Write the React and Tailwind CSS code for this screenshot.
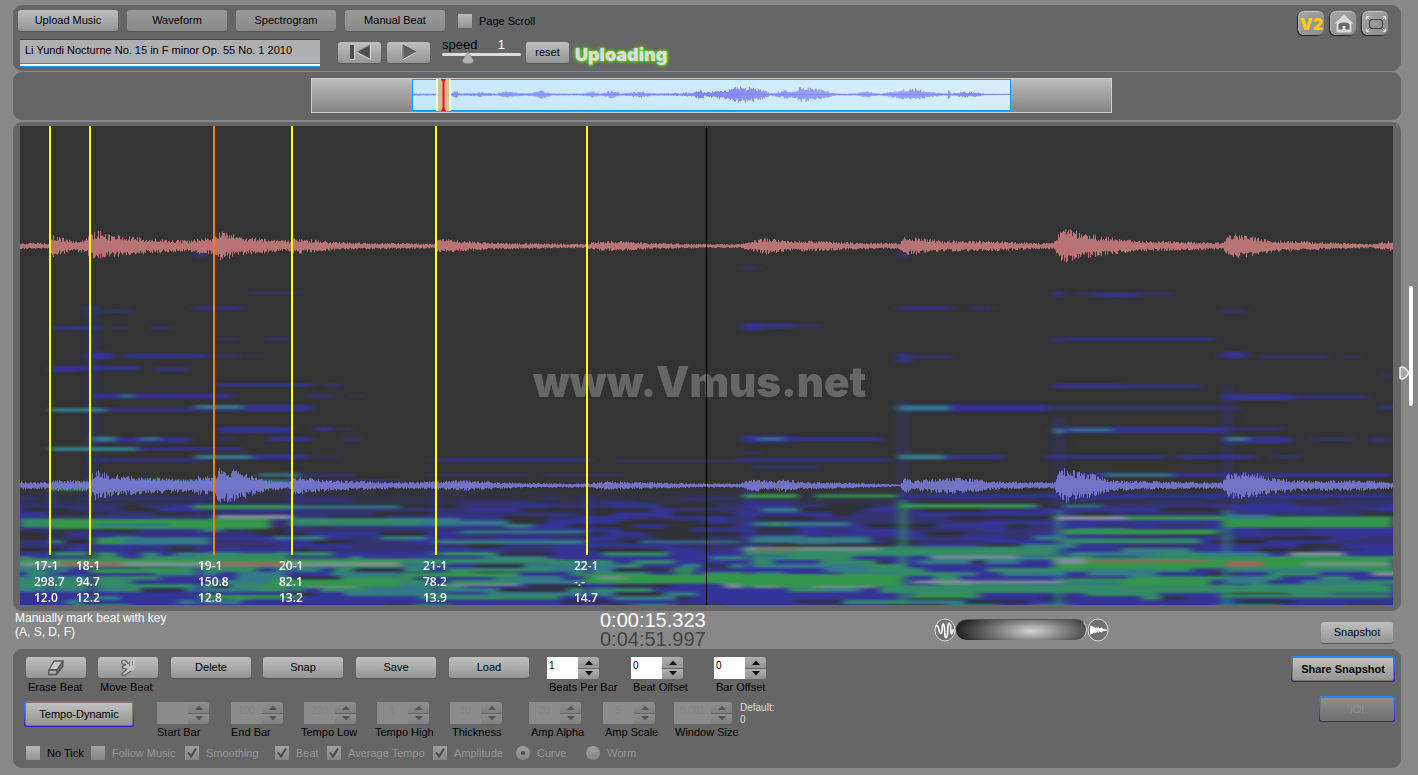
import React, { useState } from "react";

const X0 = 20;
const Y0 = 126;
const W = 1373;
const H = 479;

// small seeded generator so the drawing is the same on every load
const makeRandom = (seed) => {
  let s = seed;
  return () => {
    s = (s * 1664525 + 1013904223) % 4294967296;
    return s / 4294967296;
  };
};

const envelopeAt = (keys, x) => {
  for (let i = 1; i < keys.length; i++) {
    if (x <= keys[i][0]) {
      const [x1, a1] = keys[i - 1];
      const [x2, a2] = keys[i];
      return a1 + ((a2 - a1) * (x - x1)) / (x2 - x1 || 1);
    }
  }
  return keys[keys.length - 1][1];
};

// Build the wave outline as one vertical stroke for every pixel
const wavePath = (keys, mid, seed) => {
  const rnd = makeRandom(seed);
  let d = "";
  for (let x = keys[0][0]; x < keys[keys.length - 1][0]; x++) {
    const a = envelopeAt(keys, x);
    const up = a * (0.5 + rnd() * 0.6);
    const down = a * (0.5 + rnd() * 0.6);
    d += `M${x + 0.5} ${(mid - up).toFixed(1)}V${(mid + down).toFixed(1)}`;
  }
  return d;
};

const redWave = [
  [20, 3], [48, 3], [51, 11], [60, 8], [75, 5], [85, 7], [90, 11], [98, 15], [106, 11],
  [130, 9], [150, 7], [190, 5], [198, 8], [212, 8], [218, 14], [228, 12], [245, 8], [290, 5],
  [293, 8], [312, 6], [335, 4], [370, 3], [400, 3], [435, 2], [438, 7], [460, 5], [500, 3],
  [585, 2], [595, 4], [615, 5], [650, 3], [700, 2], [740, 2], [752, 5], [768, 8], [785, 5],
  [812, 5], [840, 4], [870, 3], [899, 3], [904, 9], [916, 8], [942, 5], [993, 5], [1034, 3],
  [1053, 3], [1058, 12], [1066, 18], [1081, 12], [1106, 9], [1137, 5], [1199, 4], [1223, 3],
  [1228, 12], [1242, 11], [1271, 6], [1312, 4], [1370, 2], [1384, 4], [1393, 5],
];

const blueWave = [
  [20, 4], [50, 3], [52, 5], [88, 5], [92, 13], [97, 14], [110, 11], [130, 9], [150, 8],
  [190, 6], [198, 9], [214, 8], [219, 17], [235, 15], [250, 10], [268, 5], [288, 3], [293, 9],
  [310, 7], [330, 5], [370, 4], [400, 3], [436, 4], [470, 5], [500, 3], [560, 2], [585, 2],
  [605, 4], [650, 3], [700, 2], [740, 2], [746, 5], [756, 6], [770, 4], [785, 6], [800, 4],
  [840, 3], [900, 1], [904, 8], [913, 4], [932, 7], [952, 8], [968, 7], [993, 4], [1045, 3],
  [1054, 3], [1059, 14], [1067, 17], [1081, 13], [1096, 10], [1112, 5], [1158, 4], [1222, 3],
  [1228, 12], [1251, 13], [1269, 8], [1297, 5], [1364, 5], [1393, 3],
];

const overviewWave = [
  [412, 1], [450, 1], [454, 4], [459, 1], [480, 2], [495, 1], [506, 3], [525, 1], [540, 4],
  [552, 1], [580, 1], [592, 3], [600, 1], [612, 4], [620, 1], [640, 3], [655, 1], [693, 2],
  [699, 5], [705, 2], [715, 4], [728, 5], [738, 8], [752, 7], [762, 5], [770, 1], [785, 4],
  [793, 3], [800, 7], [812, 6], [825, 4], [836, 1], [855, 1], [866, 3], [880, 1], [900, 4],
  [915, 6], [927, 3], [945, 1], [948, 1], [949, 7], [951, 1], [965, 3], [980, 2], [985, 0.6],
  [1011, 0.6],
];

const colours = {
  b: "#333370",
  B: "#333396",
  t: "#337a88",
  g: "#33964a",
  G: "#338a66",
  m: "#7f8f96",
  r: "#a85e62",
};

// [y, x1, x2, colour, thickness]
const bands = [
  [255, 193, 206, "b", 6], [293, 250, 300, "b", 2], [308, 195, 242, "B", 3], [311, 85, 98, "b", 8],
  [311, 100, 132, "b", 3], [328, 50, 102, "B", 3], [328, 113, 130, "b", 2], [328, 150, 172, "b", 3],
  [339, 215, 240, "b", 2], [339, 268, 290, "b", 3], [356, 86, 113, "B", 7], [356, 123, 208, "B", 4],
  [356, 215, 240, "b", 3], [356, 250, 262, "b", 2], [369, 50, 80, "B", 6], [368, 80, 140, "B", 4],
  [369, 155, 190, "b", 5], [385, 215, 312, "B", 3], [385, 323, 342, "B", 2], [396, 90, 232, "B", 5],
  [396, 120, 133, "t", 3], [396, 307, 333, "B", 2], [396, 350, 364, "b", 2], [408, 195, 312, "B", 6],
  [407, 195, 242, "t", 4], [410, 100, 200, "B", 3], [410, 50, 105, "t", 4], [430, 217, 293, "B", 6],
  [429, 315, 332, "B", 4], [429, 342, 355, "b", 2], [440, 90, 190, "B", 5], [439, 92, 115, "t", 5],
  [439, 140, 160, "t", 3], [439, 215, 235, "b", 3], [439, 268, 312, "B", 4], [439, 342, 362, "b", 3],
  [449, 130, 242, "B", 3], [449, 50, 138, "t", 4], [457, 195, 308, "B", 5], [457, 195, 252, "t", 4],
  [457, 315, 340, "b", 2], [460, 95, 200, "B", 3], [460, 433, 590, "B", 3], [461, 615, 740, "b", 2],
  [475, 258, 300, "t", 3], [475, 300, 355, "B", 2], [484, 90, 292, "t", 8], [489, 50, 88, "g", 3],
  [475, 427, 530, "b", 2], [475, 545, 625, "b", 2], [481, 300, 400, "b", 3],
  [326, 743, 795, "B", 4], [326, 795, 822, "b", 3], [327, 743, 762, "B", 7], [268, 743, 758, "b", 3],
  [439, 743, 882, "B", 4], [439, 743, 790, "B", 7], [439, 757, 783, "t", 3], [460, 735, 890, "B", 3],
  [467, 752, 818, "b", 3], [453, 743, 762, "b", 2], [255, 898, 909, "b", 7], [294, 1054, 1064, "B", 5],
  [294, 1074, 1174, "b", 3], [295, 1096, 1137, "B", 4], [308, 898, 952, "B", 3], [308, 972, 993, "b", 3],
  [311, 1220, 1247, "b", 3], [339, 1053, 1215, "B", 3], [341, 1054, 1064, "b", 6], [358, 898, 909, "B", 10],
  [357, 909, 952, "b", 3], [355, 1220, 1248, "B", 6], [357, 1260, 1328, "b", 3], [357, 1342, 1362, "b", 2],
  [375, 1381, 1393, "b", 3], [386, 1053, 1200, "B", 3], [386, 1054, 1122, "B", 4], [397, 1222, 1368, "B", 3],
  [397, 1224, 1292, "B", 6], [408, 898, 1050, "B", 7], [408, 898, 950, "t", 5], [408, 1045, 1238, "b", 4],
  [407, 1381, 1393, "B", 4], [430, 1053, 1228, "B", 6], [431, 1054, 1064, "t", 5], [430, 1070, 1112, "t", 3],
  [429, 1225, 1282, "b", 4], [440, 1222, 1292, "B", 6], [439, 1226, 1248, "t", 4], [439, 1311, 1355, "b", 3],
  [440, 1368, 1393, "b", 4], [457, 898, 1004, "B", 4], [457, 898, 945, "t", 5], [457, 1045, 1166, "B", 3],
  [457, 1178, 1255, "B", 4], [457, 1271, 1302, "b", 3], [475, 1076, 1393, "B", 4], [475, 1104, 1173, "t", 3],
];

// strong partials that sit on top of the noisy low area
const lowBands = [
  [496, 743, 798, "g", 4], [496, 815, 898, "g", 3], [496, 900, 1393, "B", 4],
  [507, 193, 292, "g", 4], [507, 292, 400, "t", 3], [506, 898, 1029, "g", 4], [506, 1064, 1101, "t", 3],
  [517, 215, 292, "m", 4], [523, 20, 90, "G", 9], [524, 52, 270, "g", 10], [522, 290, 460, "t", 8],
  [522, 290, 420, "G", 6], [523, 420, 508, "t", 5], [525, 95, 170, "t", 3], [518, 1055, 1127, "m", 4],
  [518, 1127, 1222, "g", 4], [522, 1222, 1393, "g", 11], [517, 1225, 1271, "t", 5],
  [532, 460, 585, "t", 3], [532, 1063, 1218, "g", 5], [541, 95, 210, "t", 7], [541, 95, 122, "g", 6],
  [542, 435, 585, "t", 4], [542, 640, 740, "t", 2], [541, 1063, 1200, "G", 5], [524, 752, 850, "t", 4],
  [524, 770, 785, "g", 4], [540, 750, 870, "t", 6], [551, 743, 1055, "G", 9], [549, 743, 880, "m", 3],
  [549, 755, 800, "r", 2], [557, 195, 285, "G", 8], [563, 20, 400, "g", 9], [561, 400, 560, "G", 5],
  [564, 20, 400, "m", 4], [564, 60, 122, "r", 3], [564, 215, 285, "r", 3], [557, 931, 1019, "m", 3],
  [563, 1053, 1393, "g", 11], [561, 1055, 1086, "m", 6], [561, 1090, 1210, "r", 2], [564, 1226, 1262, "r", 5],
  [564, 1302, 1393, "m", 3], [571, 90, 190, "g", 4], [575, 400, 520, "g", 4], [583, 270, 400, "g", 7],
  [579, 585, 740, "g", 9], [578, 598, 625, "m", 3], [580, 740, 900, "g", 12], [582, 912, 1076, "m", 3],
  [583, 1065, 1210, "g", 9], [584, 1065, 1120, "t", 5], [589, 880, 1393, "G", 8], [585, 450, 520, "m", 2],
  [597, 200, 300, "g", 4], [597, 420, 560, "G", 5], [596, 910, 980, "g", 4], [596, 1220, 1393, "g", 3],
];

// vertical smears at the note onsets
const onsets = [
  [50, 480, 605, 6, "B"], [92, 305, 605, 10, "b"], [199, 500, 605, 8, "B"], [292, 470, 605, 6, "B"],
  [437, 490, 605, 7, "B"], [588, 495, 605, 8, "B"], [748, 485, 605, 10, "B"], [903, 400, 500, 9, "b"],
  [903, 500, 605, 9, "G"], [1059, 418, 510, 9, "b"], [1059, 510, 605, 9, "t"], [1227, 385, 510, 9, "b"],
  [1227, 510, 605, 9, "t"],
];

const makeNoise = () => {
  const rnd = makeRandom(77);
  const out = [];
  for (let y = 498; y < 607; y += 4) {
    let x = X0 - 10;
    while (x < X0 + W) {
      const len = 12 + rnd() * 60;
      const p = rnd();
      let c = null;
      if (y < 506) c = p < 0.4 ? "b" : null;
      else if (y < 552) c = p < 0.24 ? "#313136" : p < 0.62 ? "B" : p < 0.67 ? "t" : "b";
      else if (y < 592) c = p < 0.07 ? "#30304a" : p < 0.42 ? "B" : p < 0.7 ? "t" : p < 0.985 ? "G" : "m";
      else c = p < 0.14 ? "#303040" : p < 0.74 ? "B" : p < 0.92 ? "t" : "G";
      if (c) out.push([y, x, x + len, c, 4]);
      x += len;
    }
  }
  return out;
};

const noise = makeNoise();

const beats = [
  { x: 50, label: 34, name: "17-1", tempo: "298.7", time: "12.0" },
  { x: 90, label: 76, name: "18-1", tempo: "94.7", time: "12.2" },
  { x: 214, label: 198, name: "19-1", tempo: "150.8", time: "12.8", active: true },
  { x: 292, label: 279, name: "20-1", tempo: "82.1", time: "13.2" },
  { x: 436, label: 423, name: "21-1", tempo: "78.2", time: "13.9" },
  { x: 587, label: 574, name: "22-1", tempo: "-.-", time: "14.7" },
];

const percent = (x) => `${((x - X0) / W) * 100}%`;

const Band = ({ band }) => {
  const [y, x1, x2, c, h] = band;
  return (
    <rect
      x={x1}
      y={y - h / 2}
      width={x2 - x1}
      height={h}
      fill={colours[c] || c}
    />
  );
};

function Spectrogram() {
  return (
    <svg
      className="absolute inset-0 w-full h-full"
      viewBox={`${X0} ${Y0} ${W} ${H}`}
      preserveAspectRatio="none"
    >
      <defs>
        <filter id="soft" x="-2%" y="-2%" width="104%" height="104%" colorInterpolationFilters="sRGB">
          <feGaussianBlur stdDeviation="4 1" />
        </filter>
        <linearGradient id="lowFade" x1="0" y1="0" x2="0" y2="1">
          <stop offset="0" stopColor="#333399" stopOpacity="0" />
          <stop offset="0.3" stopColor="#333399" stopOpacity="0.65" />
          <stop offset="1" stopColor="#333399" />
        </linearGradient>
      </defs>
      <rect x={X0} y={Y0} width={W} height={H} fill="#333333" />
      <g filter="url(#soft)">
        <rect x="0" y="488" width="1420" height="130" fill="url(#lowFade)" />
        {noise.map((b, i) => (
          <Band key={i} band={b} />
        ))}
        {onsets.map(([x, y1, y2, w, c], i) => (
          <rect
            key={i}
            x={x - w / 2}
            y={y1}
            width={w}
            height={y2 - y1}
            fill={colours[c]}
            opacity="0.7"
          />
        ))}
        {bands.map((b, i) => (
          <Band key={i} band={b} />
        ))}
        {lowBands.map((b, i) => (
          <Band key={i} band={b} />
        ))}
      </g>
      <path d={wavePath(redWave, 246, 5)} stroke="#b87474" />
      <path d={wavePath(blueWave, 485.5, 9)} stroke="#7878d0" opacity="0.93" />
    </svg>
  );
}

const lightFace = "bg-linear-to-b from-[#c0c0c0] to-[#959595]";
const dullFace = "bg-linear-to-b from-[#9a9a9a] to-[#8a8a8a]";

const Button = ({ children, className = "", dull, ...rest }) => (
  <button
    type="button"
    className={`h-[21px] rounded-[3px] flex items-center justify-center text-[11px] leading-none text-black shadow-[0_1px_0_#555] ${
      dull ? dullFace : lightFace
    } ${className}`}
    {...rest}
  >
    {children}
  </button>
);

const Framed = ({ children, className = "", disabled }) => (
  <div
    className={`h-[26px] p-px rounded-[3px] bg-linear-to-b from-[#2a8cf0] to-[#3a10b8] ${className}`}
  >
    <button
      type="button"
      disabled={disabled}
      className={`w-full h-full rounded-[2px] border border-[#777] flex items-center justify-center text-[11px] leading-none ${
        disabled
          ? "bg-linear-to-b from-[#8e8e8e] to-[#707070] text-[#8e8e8e]"
          : "bg-linear-to-b from-[#c0c0c0] to-[#959595] text-black"
      }`}
    >
      {children}
    </button>
  </div>
);

const Check = ({ label, checked, disabled, className = "" }) => (
  <label
    className={`flex items-center gap-[7px] text-[11px] leading-[14px] whitespace-nowrap ${
      disabled ? "text-[#959595]" : "text-black"
    } ${className}`}
  >
    <span className="relative w-[14px] h-[14px] shrink-0">
      <input
        type="checkbox"
        defaultChecked={checked}
        disabled={disabled}
        className="peer block appearance-none w-[14px] h-[14px] bg-linear-to-b from-[#b8b8b8] to-[#939393] disabled:from-[#a0a0a0] disabled:to-[#858585]"
      />
      <svg
        viewBox="0 0 14 14"
        className="absolute inset-0 hidden peer-checked:block pointer-events-none"
      >
        <path d="M3 6.5L6 10.5L11 2.5" fill="none" stroke="#4a4a4a" strokeWidth="2" />
      </svg>
    </span>
    {label}
  </label>
);

const Radio = ({ label, checked, className = "" }) => (
  <label
    className={`flex items-center gap-[7px] text-[11px] leading-[14px] text-[#959595] ${className}`}
  >
    <span className="relative w-[14px] h-[14px] shrink-0">
      <input
        type="radio"
        name="view"
        disabled
        defaultChecked={checked}
        className="peer block appearance-none w-[14px] h-[14px] rounded-full bg-linear-to-b from-[#a0a0a0] to-[#858585]"
      />
      <span className="absolute left-[5px] top-[5px] w-1 h-1 rounded-full bg-[#4a4a4a] hidden peer-checked:block"></span>
    </span>
    {label}
  </label>
);

const Stepper = ({ label, value, disabled, className = "", labelClass = "", inputClass = "w-[31px]" }) => {
  const [num, setNum] = useState(value);
  const id = label.replace(/ /g, "-").toLowerCase();
  const arrow = disabled ? "#555" : "#111";
  const face = disabled
    ? "from-[#8e8e8e] to-[#808080]"
    : "from-[#b0b0b0] to-[#939393]";
  const step = (n) => setNum(String(Number(num) + n));

  return (
    <div className={`shrink-0 ${className}`}>
      <div className="flex h-[22px]">
        <input
          id={id}
          type="text"
          value={num}
          disabled={disabled}
          onChange={(e) => setNum(e.target.value)}
          className={`h-[22px] px-[2px] pb-[5px] text-[10px] ${inputClass} ${
            disabled ? "bg-[#8b8b8b] text-[#838383] text-center" : "bg-white text-black"
          }`}
        />
        <div className="flex flex-col w-[21px] gap-px">
          <button
            type="button"
            aria-label={`${label} up`}
            disabled={disabled}
            onClick={() => step(1)}
            className={`flex-1 rounded-tr-[3px] bg-linear-to-b flex items-center justify-center ${face}`}
          >
            <svg width="8" height="5" viewBox="0 0 8 5">
              <path d="M0 5L4 0.5L8 5Z" fill={arrow} />
            </svg>
          </button>
          <button
            type="button"
            aria-label={`${label} down`}
            disabled={disabled}
            onClick={() => step(-1)}
            className={`flex-1 rounded-br-[3px] bg-linear-to-b flex items-center justify-center ${face}`}
          >
            <svg width="8" height="5" viewBox="0 0 8 5">
              <path d="M0 0L4 4.5L8 0Z" fill={arrow} />
            </svg>
          </button>
        </div>
      </div>
      <label
        htmlFor={id}
        className={`block mt-px text-[11px] leading-[14px] text-black whitespace-nowrap ${labelClass}`}
      >
        {label}
      </label>
    </div>
  );
};

const IconButton = ({ label, children }) => (
  <button
    type="button"
    aria-label={label}
    className="w-[26px] h-[24px] rounded-[6px] flex items-center justify-center bg-linear-to-br from-[#a6a6a6] to-[#8a8a8a] border-t border-l border-t-[#c8c8c8] border-l-[#b4b4b4] shadow-[-1px_1px_1px_#222]"
  >
    {children}
  </button>
);

function TopBar() {
  const [title, setTitle] = useState("Li Yundi Nocturne No. 15 in F minor Op. 55 No. 1 2010");

  return (
    <header className="h-[66px] rounded-[9px] bg-[#666] pl-[5px] pr-[13px] pt-[5px] flex justify-between">
      <div>
        <div className="flex gap-[9px]">
          <Button className="w-[100px]">Upload Music</Button>
          <Button className="w-[100px]" dull>Waveform</Button>
          <Button className="w-[100px]" dull>Spectrogram</Button>
          <Button className="w-[100px]" dull>Manual Beat</Button>
          <Check label="Page Scroll" className="ml-1" />
        </div>
        <div className="flex pl-[2px] mt-[8px]">
          <input
            type="text"
            aria-label="Title"
            value={title}
            onChange={(e) => setTitle(e.target.value)}
            className="w-[300px] h-[24px] mb-[3px] pl-[5px] pb-1 text-[11px] text-black bg-[#b0b0b0] border-t border-[#444] shadow-[0_1px_0_#1595f5,0_3px_0_#fff,0_4px_0_#1595f5]"
          />
          <div className="flex gap-[6px] ml-[18px] mt-[3px]">
            <Button className="w-[43px]" aria-label="Rewind">
              <svg width="22" height="17" viewBox="0 0 22 17">
                <path d="M1 1h4v14h-4z" fill="#4d4d4d" />
                <path d="M5.500 1V15.500H1" fill="none" stroke="#d4d4d4" />
                <path d="M21 1V15L8 8Z" fill="#4d4d4d" stroke="#777" />
                <path d="M21.500 1V15.500L8 8.500" fill="none" stroke="#d8d8d8" />
              </svg>
            </Button>
            <Button className="w-[43px]" aria-label="Play">
              <svg width="16" height="17" viewBox="0 0 16 17">
                <path d="M2 1V15L15 8Z" fill="#606060" />
                <path d="M2 1V15.500L15 8.500" fill="none" stroke="#ccc" />
                <path d="M2 15V1L15 8" fill="none" stroke="#555" />
              </svg>
            </Button>
          </div>
          <div className="relative w-[79px] h-[27px] ml-3 -mt-[2px]">
            <div className="flex justify-between pr-4 leading-4 text-[13px] text-black">
              <label htmlFor="speed">speed</label>
              <output htmlFor="speed" className="text-white">1</output>
            </div>
            <div className="h-[3px] rounded-full bg-[#ddd]"></div>
            <svg className="absolute left-[20px] top-[14px]" width="12" height="13" viewBox="0 0 12 13">
              <path d="M6 0.500L11.500 9.500Q11 12.500 6 12.500T0.500 9.500Z" fill="#b4b4b4" stroke="#8a8a8a" strokeWidth="0.500" />
            </svg>
            <input
              id="speed"
              type="range"
              min="0"
              max="3"
              step="0.1"
              defaultValue="1"
              className="absolute left-0 bottom-0 w-full h-3 opacity-0"
            />
          </div>
          <Button className="w-[43px] ml-[5px] mt-[3px]">reset</Button>
          <p className="ml-[6px] mt-[6px] text-[18px] leading-5 font-black text-[#ddd] font-[Inter,sans-serif] [text-shadow:0_0_2px_#6c2,0_0_3px_#6c2,0_0_4px_#6c2,1px_1px_2px_#5b1]">
            Uploading
          </p>
        </div>
      </div>

      <div className="flex gap-[6px] mt-px h-6">
        <IconButton label="Version 2">
          <span className="text-[16px] font-black leading-none text-[#fc0] font-[Inter,sans-serif]">V2</span>
        </IconButton>
        <IconButton label="Home">
          <svg width="20" height="20" viewBox="0 0 20 20">
            <path d="M10 0.500L19.500 9.500H17.500V18.500H2.500V9.500H0.500Z" fill="#d8d8d8" />
            <path d="M4.500 15.500V11Q4.500 8.500 10 8.500T15.500 11V15.500H11.500V12H8.500V15.500Z" fill="#666" />
          </svg>
        </IconButton>
        <IconButton label="Full screen">
          <svg width="22" height="18" viewBox="0 0 22 18" fill="none">
            <rect x="4.500" y="4.500" width="13" height="9" rx="3" stroke="#444" strokeWidth="1.200" />
            <path d="M5 5L1.500 1.500M1.500 4.500V1.500H4.500M17 5L20.500 1.500M17.500 1.500H20.500V4.500M5 13L1.500 16.500M1.500 13.500V16.500H4.500M17 13L20.500 16.500M20.500 13.500V16.500H17.500" stroke="#ddd" />
          </svg>
        </IconButton>
      </div>
    </header>
  );
}

function Overview() {
  return (
    <section className="h-[48px] mt-px rounded-[9px] bg-[#666] pt-[6px]">
      <div className="relative w-[58%] ml-[298px] max-w-[801px] h-[35px] flex border border-[#ccc] bg-linear-to-b from-[#bdbdbd] to-[#858585]">
        <div className="w-[100px] shrink-0"></div>
        <div className="relative flex-1 mb-px border border-[#1898f0] bg-linear-to-r from-[#c6e8ff] to-[#d4eeff]">
          <svg
            className="absolute inset-0 w-full h-full"
            viewBox="412 79 599 30"
            preserveAspectRatio="none"
            shapeRendering="crispEdges"
          >
            <path d={wavePath(overviewWave, 93.5, 3)} stroke="#8484f4" />
            <path d="M412 93.500H1011" stroke="#8484f4" />
          </svg>
          <div className="absolute left-[23px] -top-px -bottom-px w-[15px] border-x-2 border-[#f4f4e4] bg-linear-to-r from-[#c9c58f] via-[#f0b090] to-[#c9c58f] flex justify-center opacity-95">
            <svg width="7" height="33" viewBox="0 0 7 33" preserveAspectRatio="none" className="h-full shrink-0">
              <path d="M1 0H6L4.500 3V30L6 33H1L2.500 30V3Z" fill="#e01010" />
            </svg>
          </div>
        </div>
        <div className="w-[100px] shrink-0"></div>
      </div>
    </section>
  );
}

function Plot() {
  return (
    <section className="relative h-[489px] mt-[2px] rounded-[9px] bg-[#666] pl-[7px] pr-[8px] pt-1">
      <div className="relative h-[479px] overflow-hidden">
        <Spectrogram />
        <p className="absolute top-[233px] inset-x-0 pl-[513px] text-[42px] leading-[46px] font-black text-[#898989]/60 font-[Inter,sans-serif]">
          www.Vmus.net
        </p>
        <div className="absolute left-[50%] top-0 bottom-0 w-px -ml-px bg-black"></div>
        {beats.map((beat) => (
          <React.Fragment key={beat.name}>
            <div
              className={`absolute top-0 h-[429px] w-[2px] -ml-px ${
                beat.active ? "bg-[#ff8000]" : "bg-[#ffff00]"
              }`}
              style={{ left: percent(beat.x) }}
            ></div>
            <div
              className="absolute top-[432px] text-[12px] leading-4 font-semibold text-white font-['Open_Sans',sans-serif]"
              style={{ left: percent(beat.label) }}
            >
              <p>{beat.name}</p>
              <p>{beat.tempo}</p>
              <p>{beat.time}</p>
            </div>
          </React.Fragment>
        ))}
      </div>

      {/* vertical zoom, hangs over the page margin */}
      <div className="absolute -right-3 top-[164px] w-[14px] h-[120px]">
        <div className="ml-[10px] w-1 h-full rounded-full bg-white"></div>
        <svg className="absolute left-0 top-[80px]" width="11" height="14" viewBox="0 0 11 14">
          <path d="M1 2Q1 1 3 1Q5 1 7 3L10 7L7 11Q5 13 3 13Q1 13 1 12Z" fill="#aaa" stroke="#eee" strokeWidth="1.500" />
        </svg>
        <input
          type="range"
          aria-label="Vertical zoom"
          className="absolute inset-0 w-full h-full opacity-0 [writing-mode:vertical-lr]"
        />
      </div>
    </section>
  );
}

function StatusBar() {
  return (
    <section className="h-[38px] grid grid-cols-[585px_334px_1fr_auto] pl-[2px] pr-2">
      <p className="text-[12px] leading-[14px] text-white">
        Manually mark beat with key
        <br />
        (A, S, D, F)
      </p>
      <div className="text-[20px] leading-[19px]">
        <p className="text-white">0:00:15.323</p>
        <p className="text-[#444]">0:04:51.997</p>
      </div>
      <div className="flex items-center pb-px">
        <svg width="22" height="24" viewBox="0 0 22 24">
          <ellipse cx="11" cy="12" rx="10" ry="11" fill="#707070" stroke="#ddd" />
          <path d="M2 9Q3.500 5 5 12T8 13L8.500 7Q9.500 4 10.500 9L11 18Q12 22 13.500 17L14 7Q15 3 16.500 7L17 15Q18 18 19.500 11" fill="none" stroke="#fff" strokeWidth="1.600" />
        </svg>
        <div className="relative w-[131px] h-[21px] rounded-full border-t border-r border-t-[#555] border-r-[#ccc] bg-[radial-gradient(ellipse_58%_110%_at_58%_55%,#d4d4d4,#777_50%,#222)]">
          <input
            type="range"
            aria-label="Horizontal zoom"
            className="absolute inset-0 w-full h-full opacity-0"
          />
        </div>
        <svg width="22" height="24" viewBox="0 0 22 24">
          <ellipse cx="11" cy="12" rx="10" ry="11" fill="#707070" stroke="#ddd" />
          <path d="M3 7L4.500 8.500L5 7.500L6 9L7 8.500L8 10L9.500 9L10 10.500L11.500 8.500L12 10.500L15 9.500L16 11L20 11.500V13L16 13L15 14.500L12 13.500L11.500 15L10 13.500L9 15L7 14.500L6 16L4 16L3 17Z" fill="#fff" />
        </svg>
      </div>
      <Button className="w-[72px] mt-[11px]">Snapshot</Button>
    </section>
  );
}

const tempoFields = [
  { label: "Start Bar", value: "", className: "w-[74px]" },
  { label: "End Bar", value: "100", className: "w-[73px]" },
  { label: "Tempo Low", value: "220", className: "w-[73px]", labelClass: "-ml-[3px]" },
  { label: "Tempo High", value: "1", className: "w-[73px]", labelClass: "-ml-[2px]" },
  { label: "Thickness", value: "10", className: "w-[79px]", labelClass: "ml-[2px]" },
  { label: "Amp Alpha", value: "20", className: "w-[74px]", labelClass: "ml-[2px]" },
  { label: "Amp Scale", value: "5", className: "w-[71px]", labelClass: "ml-[2px]" },
  { label: "Window Size", value: "0.001", className: "w-[66px]", labelClass: "ml-px", inputClass: "w-[37px]" },
];

function Controls() {
  return (
    <section className="h-[119px] rounded-[9px] bg-[#666] pl-[13px] pr-[6px] pt-[7px] flex justify-between">
      <div>
        <div className="flex pt-px h-[46px]">
          <div>
            <Button className="w-[60px]" aria-labelledby="erase-label">
              <svg width="18" height="16" viewBox="0 0 18 16" stroke="#555" strokeWidth="1.300" strokeLinejoin="round">
                <path d="M7 1H16L10 10H2Z" fill="#c8c8c8" />
                <path d="M2 10H10L9.500 14.500H1.500Z" fill="#aaa" />
                <path d="M10 10L16 1V6L9.500 14.500Z" fill="#777" />
              </svg>
            </Button>
            <p id="erase-label" className="ml-[2px] mt-[2px] text-[11px] leading-[14px] text-black">Erase Beat</p>
          </div>
          <div className="ml-3">
            <Button className="w-[60px]" aria-labelledby="move-label">
              <svg width="18" height="17" viewBox="0 0 18 17" strokeLinejoin="round">
                <path d="M3 2Q5 0.500 7.500 1.500L16 1V8.500Q15.500 11.500 12 12L6 16Q2.500 17 3 14.500L8 10L4.500 9.500Q2.500 8.500 4 7L7 5.500L4 5Q2 4 3 2Z" fill="#c4c4c4" />
                <path d="M7 5.500L4 5Q2 4 3 2Q5 0.500 7 2L9.500 5M7 5.500L4 7Q2.500 8.500 4.500 9.500L8 10L3 14.500Q2.500 17 6 16L12 12" fill="none" stroke="#5c5c5c" strokeWidth="1.200" />
                <path d="M10.500 2V7M13.500 2V6.500" fill="none" stroke="#777" />
              </svg>
            </Button>
            <p id="move-label" className="ml-[2px] mt-[2px] text-[11px] leading-[14px] text-black">Move Beat</p>
          </div>
          <Button className="w-20 ml-[13px]">Delete</Button>
          <Button className="w-20 ml-3">Snap</Button>
          <Button className="w-20 ml-[13px]">Save</Button>
          <Button className="w-20 ml-[13px]">Load</Button>
          <Stepper label="Beats Per Bar" value="1" className="w-[84px] ml-[18px]" labelClass="ml-[2px]" />
          <Stepper label="Beat Offset" value="0" className="w-[83px]" labelClass="ml-[2px]" />
          <Stepper label="Bar Offset" value="0" className="w-[84px]" labelClass="ml-[2px]" />
        </div>

        <div className="flex -ml-[2px] h-[44px]">
          <Framed className="w-[110px] -mt-px mr-[23px]">Tempo-Dynamic</Framed>
          {tempoFields.map((field) => (
            <Stepper key={field.label} disabled {...field} />
          ))}
          <p className="text-[10px] leading-3 text-[#ddd]">
            Default:
            <br />0
          </p>
        </div>

        <div className="flex">
          <Check label="No Tick" className="w-[65px]" />
          <Check label="Follow Music" disabled className="w-[94px]" />
          <Check label="Smoothing" checked disabled className="w-[90px]" />
          <Check label="Beat" checked disabled className="w-[52px]" />
          <Check label="Average Tempo" checked disabled className="w-[106px]" />
          <Check label="Amplitude" checked disabled className="w-[83px]" />
          <Radio label="Curve" checked className="w-[70px]" />
          <Radio label="Worm" />
        </div>
      </div>

      <div className="flex flex-col items-end gap-[14px]">
        <Framed className="w-[104px]">
          <b>Share Snapshot</b>
        </Framed>
        <Framed className="w-[76px]" disabled>IOI</Framed>
      </div>
    </section>
  );
}

export default function App() {
  return (
    <main className="min-h-screen bg-[#888] pt-[5px] pl-[13px] pr-[17px] pb-[7px] overflow-hidden font-['Liberation_Sans',Arial,sans-serif]">
      <TopBar />
      <Overview />
      <Plot />
      <StatusBar />
      <Controls />
    </main>
  );
}
